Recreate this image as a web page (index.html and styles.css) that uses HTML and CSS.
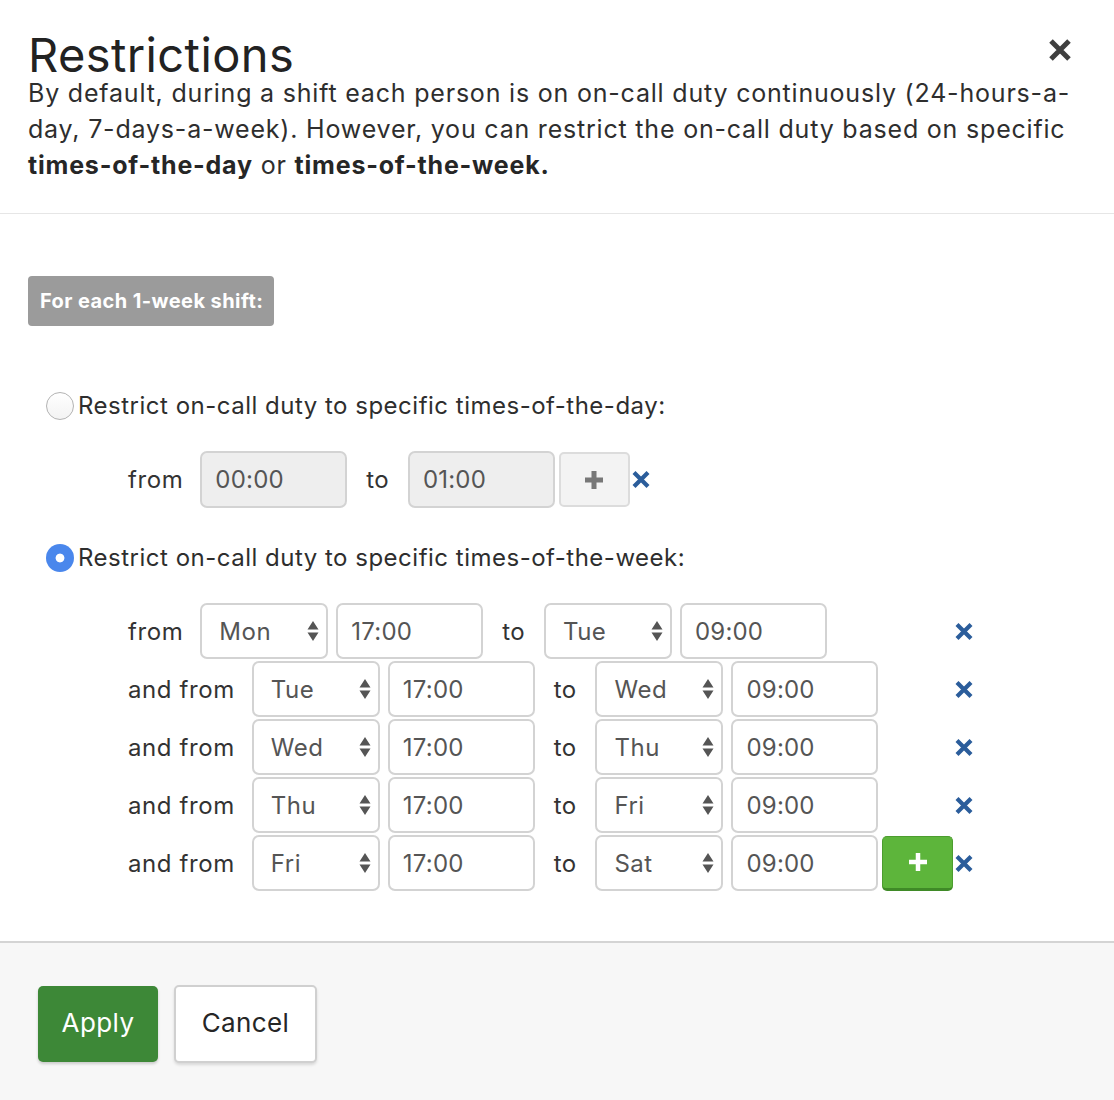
FILE: index.html
```html
<!DOCTYPE html>
<html>
<head>
<meta charset="utf-8">
<link rel="stylesheet" href="styles.css">
</head>
<body>
<div class="modal">
  <div class="header">
    <button class="close" aria-label="Close">
      <svg width="26" height="26" viewBox="0 0 26 26"><path d="M4 4 L22 22 M22 4 L4 22" stroke="#3f3f3f" stroke-width="5" stroke-linecap="butt"/></svg>
    </button>
    <h1 class="title">Restrictions</h1>
    <p class="intro">By default, during a shift each person is on on-call duty continuously (24-hours-a-day, 7-days-a-week). However, you can restrict the on-call duty based on specific <b>times-of-the-day</b> or <b>times-of-the-week.</b></p>
  </div>

  <div class="body">
    <div class="badge">For each 1-week shift:</div>

    <label class="radio-row day-radio"><span class="radio"></span>Restrict on-call duty to specific times-of-the-day:</label>

    <div class="day-row">
      <span class="lbl">from</span>
      <div class="inp disabled">00:00</div>
      <span class="to">to</span>
      <div class="inp disabled">01:00</div>
      <button class="plus grey"><svg width="20" height="20" viewBox="0 0 20 20"><path d="M10 1 V19 M1 10 H19" stroke="#777" stroke-width="5"/></svg></button>
      <span class="del"><svg width="18" height="17" viewBox="0 0 18 17"><path d="M2 1.5 L16 15.5 M16 1.5 L2 15.5" stroke="#2b5d9b" stroke-width="4.2"/></svg></span>
    </div>

    <label class="radio-row week-radio"><span class="radio checked"></span>Restrict on-call duty to specific times-of-the-week:</label>

    <div class="week">
      <div class="week-row">
        <span class="lbl">from</span>
        <div class="sel">Mon<svg class="arr" width="12" height="22" viewBox="0 0 12 22"><path d="M6 1 L11.5 9.5 H0.5 Z M6 21 L11.5 12.5 H0.5 Z" fill="#555"/></svg></div>
        <div class="inp">17:00</div>
        <span class="to">to</span>
        <div class="sel">Tue<svg class="arr" width="12" height="22" viewBox="0 0 12 22"><path d="M6 1 L11.5 9.5 H0.5 Z M6 21 L11.5 12.5 H0.5 Z" fill="#555"/></svg></div>
        <div class="inp">09:00</div>
        <span class="del right"><svg width="18" height="17" viewBox="0 0 18 17"><path d="M2 1.5 L16 15.5 M16 1.5 L2 15.5" stroke="#2b5d9b" stroke-width="4.2"/></svg></span>
      </div>
      <div class="week-row">
        <span class="lbl">and from</span>
        <div class="sel">Tue<svg class="arr" width="12" height="22" viewBox="0 0 12 22"><path d="M6 1 L11.5 9.5 H0.5 Z M6 21 L11.5 12.5 H0.5 Z" fill="#555"/></svg></div>
        <div class="inp">17:00</div>
        <span class="to">to</span>
        <div class="sel">Wed<svg class="arr" width="12" height="22" viewBox="0 0 12 22"><path d="M6 1 L11.5 9.5 H0.5 Z M6 21 L11.5 12.5 H0.5 Z" fill="#555"/></svg></div>
        <div class="inp">09:00</div>
        <span class="del right"><svg width="18" height="17" viewBox="0 0 18 17"><path d="M2 1.5 L16 15.5 M16 1.5 L2 15.5" stroke="#2b5d9b" stroke-width="4.2"/></svg></span>
      </div>
      <div class="week-row">
        <span class="lbl">and from</span>
        <div class="sel">Wed<svg class="arr" width="12" height="22" viewBox="0 0 12 22"><path d="M6 1 L11.5 9.5 H0.5 Z M6 21 L11.5 12.5 H0.5 Z" fill="#555"/></svg></div>
        <div class="inp">17:00</div>
        <span class="to">to</span>
        <div class="sel">Thu<svg class="arr" width="12" height="22" viewBox="0 0 12 22"><path d="M6 1 L11.5 9.5 H0.5 Z M6 21 L11.5 12.5 H0.5 Z" fill="#555"/></svg></div>
        <div class="inp">09:00</div>
        <span class="del right"><svg width="18" height="17" viewBox="0 0 18 17"><path d="M2 1.5 L16 15.5 M16 1.5 L2 15.5" stroke="#2b5d9b" stroke-width="4.2"/></svg></span>
      </div>
      <div class="week-row">
        <span class="lbl">and from</span>
        <div class="sel">Thu<svg class="arr" width="12" height="22" viewBox="0 0 12 22"><path d="M6 1 L11.5 9.5 H0.5 Z M6 21 L11.5 12.5 H0.5 Z" fill="#555"/></svg></div>
        <div class="inp">17:00</div>
        <span class="to">to</span>
        <div class="sel">Fri<svg class="arr" width="12" height="22" viewBox="0 0 12 22"><path d="M6 1 L11.5 9.5 H0.5 Z M6 21 L11.5 12.5 H0.5 Z" fill="#555"/></svg></div>
        <div class="inp">09:00</div>
        <span class="del right"><svg width="18" height="17" viewBox="0 0 18 17"><path d="M2 1.5 L16 15.5 M16 1.5 L2 15.5" stroke="#2b5d9b" stroke-width="4.2"/></svg></span>
      </div>
      <div class="week-row">
        <span class="lbl">and from</span>
        <div class="sel">Fri<svg class="arr" width="12" height="22" viewBox="0 0 12 22"><path d="M6 1 L11.5 9.5 H0.5 Z M6 21 L11.5 12.5 H0.5 Z" fill="#555"/></svg></div>
        <div class="inp">17:00</div>
        <span class="to">to</span>
        <div class="sel">Sat<svg class="arr" width="12" height="22" viewBox="0 0 12 22"><path d="M6 1 L11.5 9.5 H0.5 Z M6 21 L11.5 12.5 H0.5 Z" fill="#555"/></svg></div>
        <div class="inp">09:00</div>
        <button class="plus green"><svg width="20" height="20" viewBox="0 0 20 20"><path d="M10 1 V19 M1 10 H19" stroke="#fff" stroke-width="4.5"/></svg></button>
        <span class="del right-tight"><svg width="18" height="17" viewBox="0 0 18 17"><path d="M2 1.5 L16 15.5 M16 1.5 L2 15.5" stroke="#2b5d9b" stroke-width="4.2"/></svg></span>
      </div>
    </div>
  </div>

  <div class="footer">
    <button class="btn apply">Apply</button>
    <button class="btn cancel">Cancel</button>
  </div>
</div>
</body>
</html>
```

FILE: styles.css
```css
* { box-sizing: border-box; }
html, body { margin: 0; padding: 0; }
body {
  font-family: Inter, "Noto Sans", sans-serif;
  color: #262626;
  background: #fff;
  width: 1114px;
  height: 1100px;
  overflow: hidden;
}
.modal { display: flex; flex-direction: column; height: 1100px; }

.header {
  position: relative;
  padding: 35px 36px 30px 28px;
  border-bottom: 1px solid #e6e6e6;
}
.close {
  position: absolute;
  right: 41px;
  top: 37px;
  background: none;
  border: 0;
  padding: 0;
  width: 26px;
  height: 26px;
  display: flex;
}
.title {
  margin: 0;
  font-weight: 400;
  font-size: 47px;
  line-height: 40px;
  letter-spacing: 0.4px;
  color: #222;
}
.intro {
  margin: 0;
  font-size: 25px;
  line-height: 36px;
  letter-spacing: 0.8px;
  color: #2e2e2e;
}
.intro b { font-weight: 700; color: #262626; letter-spacing: 0.8px; }

.body {
  padding: 62px 0 0 28px;
  flex: 0 0 auto;
  height: 729px;
  border-bottom: 2px solid #d4d4d4;
}
.badge {
  display: inline-flex;
  align-items: center;
  height: 50px;
  padding: 0 11px 0 12px;
  background: #9b9b9b;
  color: #fff;
  font-weight: 700;
  font-size: 20px;
  letter-spacing: 0.42px;
  border-radius: 4px;
}
.radio-row {
  display: flex;
  align-items: center;
  font-size: 24px;
  line-height: 36px;
  letter-spacing: 0.5px;
  color: #2e2e2e;
  margin-left: 18px;
}
.day-radio { margin-top: 62px; }
.week-radio { margin-top: 32px; }
.radio {
  width: 28px;
  height: 28px;
  border-radius: 50%;
  border: 1.5px solid #b3b3b3;
  background: linear-gradient(#fff, #f3f3f3);
  margin-right: 4px;
  flex: 0 0 auto;
}
.radio.checked {
  border: 0;
  background: radial-gradient(circle, #fff 0 4px, #4a87ec 4.8px);
}

.day-row {
  display: flex;
  align-items: center;
  margin: 27px 0 0 100px;
  height: 57px;
}
.lbl {
  font-size: 24px;
  letter-spacing: 0.6px;
  color: #333;
  margin-right: 17px;
}
.to {
  font-size: 24px;
  letter-spacing: 0.3px;
  color: #333;
  margin: 0 19px 0 19px;
}
.inp {
  width: 147px;
  height: 57px;
  border: 2px solid #d3d3d3;
  border-radius: 7px;
  padding-left: 13px;
  display: flex;
  align-items: center;
  font-size: 24px;
  letter-spacing: 0.2px;
  color: #555;
  background: #fff;
}
.inp.disabled { background: #eeeeee; }
.sel {
  width: 128px;
  height: 57px;
  border: 2px solid #d3d3d3;
  border-radius: 7px;
  padding: 0 7px 0 17px;
  display: flex;
  align-items: center;
  justify-content: space-between;
  font-size: 24px;
  letter-spacing: 0.5px;
  color: #555;
  background: #fff;
  margin-right: 8px;
}
.plus {
  width: 71px;
  height: 55px;
  border-radius: 5px;
  display: flex;
  align-items: center;
  justify-content: center;
  padding: 0;
  margin-left: 4px;
}
.plus.grey {
  background: #f3f3f3;
  border: 2px solid #dcdcdc;
}
.plus.green {
  background: #5db53b;
  border: 1px solid #4c9d2f;
  border-bottom: 3px solid #3f8a27;
}
.del { display: flex; margin-left: 2px; }
.week {
  margin: 27px 0 0 100px;
  width: 845px;
}
.week-row {
  display: flex;
  align-items: center;
  height: 56px;
  margin-bottom: 2px;
}
.week-row .inp { height: 56px; }
.week-row .sel { height: 56px; }
.del.right { margin-left: auto; }
.del.right-tight { margin-left: auto; }

.footer {
  flex: 1;
  background: #f7f7f7;
  padding: 42px 0 0 38px;
  display: flex;
  align-items: flex-start;
  gap: 16px;
}
.btn {
  font-family: Inter, "Noto Sans", sans-serif;
  font-size: 26px;
  letter-spacing: 0.4px;
  height: 76px;
  border-radius: 5px;
  padding: 0 0 4px;
}
.apply {
  width: 120px;
  background: #3d8837;
  color: #fff;
  border: 0;
  margin-top: 1px;
  box-shadow: 0 2px 3px rgba(0,0,0,0.18);
}
.cancel {
  width: 143px;
  height: 78px;
  background: #fff;
  color: #262626;
  border: 2px solid #d0d0d0;
  box-shadow: 0 2px 3px rgba(0,0,0,0.12);
}
```
